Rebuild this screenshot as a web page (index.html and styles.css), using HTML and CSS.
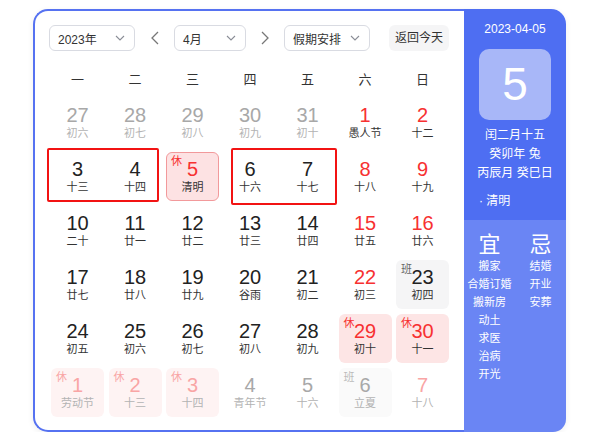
FILE: index.html
```html
<!DOCTYPE html>
<html lang="zh-CN">
<head>
<meta charset="utf-8">
<title>万年历</title>
<link rel="stylesheet" href="styles.css">
</head>
<body>
<div class="cal">
  <div class="main">
    <div class="toolbar">
      <div class="select sel-year"><span>2023年</span><svg class="dd" viewBox="0 0 10 6"><path d="M1 1l4 4 4-4"/></svg></div>
      <div class="arrow"><svg viewBox="0 0 8 14"><path d="M7 1L1 7l6 6"/></svg></div>
      <div class="select sel-month"><span>4月</span><svg class="dd" viewBox="0 0 10 6"><path d="M1 1l4 4 4-4"/></svg></div>
      <div class="arrow"><svg viewBox="0 0 8 14"><path d="M1 1l6 6-6 6"/></svg></div>
      <div class="select sel-hol"><span>假期安排</span><svg class="dd" viewBox="0 0 10 6"><path d="M1 1l4 4 4-4"/></svg></div>
      <div class="btn-today">返回今天</div>
    </div>
    <div class="weekdays">
      <span>一</span><span>二</span><span>三</span><span>四</span><span>五</span><span>六</span><span>日</span>
    </div>
    <div class="grid">
      <div class="cell other"><b>27</b><i>初六</i></div>
      <div class="cell other"><b>28</b><i>初七</i></div>
      <div class="cell other"><b>29</b><i>初八</i></div>
      <div class="cell other"><b>30</b><i>初九</i></div>
      <div class="cell other"><b>31</b><i>初十</i></div>
      <div class="cell wkend"><b>1</b><i>愚人节</i></div>
      <div class="cell wkend"><b>2</b><i>十二</i></div>

      <div class="cell"><b>3</b><i>十三</i></div>
      <div class="cell"><b>4</b><i>十四</i></div>
      <div class="cell rest selected"><em>休</em><b>5</b><i>清明</i></div>
      <div class="cell"><b>6</b><i>十六</i></div>
      <div class="cell"><b>7</b><i>十七</i></div>
      <div class="cell wkend"><b>8</b><i>十八</i></div>
      <div class="cell wkend"><b>9</b><i>十九</i></div>

      <div class="cell"><b>10</b><i>二十</i></div>
      <div class="cell"><b>11</b><i>廿一</i></div>
      <div class="cell"><b>12</b><i>廿二</i></div>
      <div class="cell"><b>13</b><i>廿三</i></div>
      <div class="cell"><b>14</b><i>廿四</i></div>
      <div class="cell wkend"><b>15</b><i>廿五</i></div>
      <div class="cell wkend"><b>16</b><i>廿六</i></div>

      <div class="cell"><b>17</b><i>廿七</i></div>
      <div class="cell"><b>18</b><i>廿八</i></div>
      <div class="cell"><b>19</b><i>廿九</i></div>
      <div class="cell"><b>20</b><i>谷雨</i></div>
      <div class="cell"><b>21</b><i>初二</i></div>
      <div class="cell wkend"><b>22</b><i>初三</i></div>
      <div class="cell work"><em>班</em><b>23</b><i>初四</i></div>

      <div class="cell"><b>24</b><i>初五</i></div>
      <div class="cell"><b>25</b><i>初六</i></div>
      <div class="cell"><b>26</b><i>初七</i></div>
      <div class="cell"><b>27</b><i>初八</i></div>
      <div class="cell"><b>28</b><i>初九</i></div>
      <div class="cell rest"><em>休</em><b>29</b><i>初十</i></div>
      <div class="cell rest"><em>休</em><b>30</b><i>十一</i></div>

      <div class="cell other rest"><em>休</em><b>1</b><i>劳动节</i></div>
      <div class="cell other rest"><em>休</em><b>2</b><i>十三</i></div>
      <div class="cell other rest"><em>休</em><b>3</b><i>十四</i></div>
      <div class="cell other"><b>4</b><i>青年节</i></div>
      <div class="cell other"><b>5</b><i>十六</i></div>
      <div class="cell other work"><em>班</em><b>6</b><i>立夏</i></div>
      <div class="cell other wkend"><b>7</b><i>十八</i></div>
    </div>
    <div class="mark mark-a"></div>
    <div class="mark mark-b"></div>
  </div>
  <div class="side">
    <div class="side-top">
      <div class="date">2023-04-05</div>
      <div class="bigday">5</div>
      <div class="lunar">
        <p>闰二月十五</p>
        <p>癸卯年 兔</p>
        <p>丙辰月 癸巳日</p>
      </div>
      <div class="term">· 清明</div>
    </div>
    <div class="side-bottom">
      <div class="col">
        <div class="head">宜</div>
        <p>搬家</p><p>合婚订婚</p><p>搬新房</p><p>动土</p><p>求医</p><p>治病</p><p>开光</p>
      </div>
      <div class="col">
        <div class="head">忌</div>
        <p>结婚</p><p>开业</p><p>安葬</p>
      </div>
    </div>
  </div>
</div>
</body>
</html>
```

FILE: styles.css
```css
* { box-sizing: border-box; }
html, body { margin: 0; padding: 0; background: #fff; }
body {
  font-family: "Liberation Sans", "Noto Sans CJK SC", sans-serif;
  color: #333;
  padding: 9px 0 0 33px;
}
p { margin: 0; }

.cal {
  display: flex;
  width: 533px;
  height: 423px;
  border-radius: 15px;
  box-shadow: 0 2px 6px rgba(0, 0, 0, 0.07);
}

.main {
  position: relative;
  width: 431px;
  height: 423px;
  border: 2px solid #5672f1;
  border-right: none;
  border-radius: 15px 0 0 15px;
  padding: 14px 0 0 14px;
}

/* toolbar */
.toolbar {
  display: flex;
  align-items: center;
  height: 26px;
}
.select {
  display: flex;
  align-items: center;
  justify-content: space-between;
  height: 26px;
  border: 1px solid #d9dbe2;
  border-radius: 6px;
  padding: 0 9px 0 8px;
  font-size: 12px;
  color: #333;
}
.sel-year { width: 86px; }
.sel-month { width: 72px; }
.sel-hol { width: 86px; }
.dd {
  width: 10px;
  height: 6px;
  fill: none;
  stroke: #8a8d96;
  stroke-width: 1.1;
}
.arrow {
  width: 39px;
  display: flex;
  justify-content: center;
  align-items: center;
}
.sel-month + .arrow { width: 38px; }
.arrow svg {
  width: 8px;
  height: 14px;
  fill: none;
  stroke: #777;
  stroke-width: 1.3;
}
.btn-today {
  margin-left: 19px;
  width: 60px;
  height: 26px;
  line-height: 26px;
  text-align: center;
  background: #f5f5f6;
  border-radius: 6px;
  font-size: 12px;
  color: #333;
}

/* weekday header */
.weekdays {
  margin: 14px 0 0 2px;
  display: grid;
  grid-template-columns: repeat(7, 53px);
  column-gap: 4.5px;
  height: 30px;
  line-height: 30px;
  text-align: center;
  font-size: 13px;
  color: #333;
}

/* day grid */
.grid {
  margin: 3px 0 0 2px;
  display: grid;
  grid-template-columns: repeat(7, 53px);
  grid-auto-rows: 49px;
  column-gap: 4.5px;
  row-gap: 5px;
}
.cell {
  position: relative;
  border-radius: 6px;
  text-align: center;
  padding-top: 6px;
}
.cell b {
  display: block;
  font-weight: normal;
  font-size: 20px;
  line-height: 22px;
  color: #222;
}
.cell i {
  display: block;
  font-style: normal;
  font-size: 11px;
  line-height: 14px;
  color: #333;
}
.cell em {
  position: absolute;
  left: 5px;
  top: 3px;
  font-style: normal;
  font-size: 11px;
  line-height: 13px;
}
.cell.wkend b { color: #f73131; }
.cell.other b { color: #a8a8a8; }
.cell.other i { color: #b3b3b3; }

.cell.rest { background: #fde5e5; }
.cell.rest b, .cell.rest em { color: #f73131; }
.cell.selected {
  background: #fde2e3;
  border: 1px solid #f2999b;
  padding-top: 5px;
}
.cell.selected em { left: 4px; top: 2px; }

.cell.work { background: #f5f5f6; }
.cell.work em { color: #666; }

.cell.other.rest { background: #fef3f3; }
.cell.other.rest b, .cell.other.rest em { color: #f9a5a5; }
.cell.other.work { background: #fafafa; }
.cell.other.work em { color: #bbb; }
.cell.other.wkend b { color: #f9a5a5; }

/* annotation boxes */
.mark {
  position: absolute;
  border: 2px solid #f21313;
  border-radius: 2px;
}
.mark-a { left: 12px; top: 137px; width: 112px; height: 54px; }
.mark-b { left: 196px; top: 137px; width: 106px; height: 57px; }

/* side panel */
.side {
  width: 102px;
  height: 423px;
  border-radius: 0 15px 13px 0;
  overflow: hidden;
  display: flex;
  flex-direction: column;
  color: #fff;
}
.side-top {
  height: 211px;
  background: #4e6ef2;
  padding-top: 12px;
  text-align: center;
}
.date {
  font-size: 12px;
  line-height: 16px;
}
.bigday {
  margin: 12px auto 0;
  width: 72px;
  height: 71px;
  border-radius: 10px;
  background: #a8b7f8;
  font-size: 46px;
  line-height: 71px;
}
.lunar {
  margin-top: 6px;
  font-size: 12px;
  line-height: 19px;
}
.term {
  margin-top: 9px;
  text-align: left;
  padding-left: 15px;
  font-size: 12px;
  line-height: 19px;
}
.side-bottom {
  flex: 1;
  background: #6a85f4;
  display: flex;
  padding-top: 13px;
}
.col {
  width: 51px;
  text-align: center;
  font-size: 11px;
  line-height: 18px;
}
.col .head {
  font-size: 22px;
  line-height: 24px;
}
```
